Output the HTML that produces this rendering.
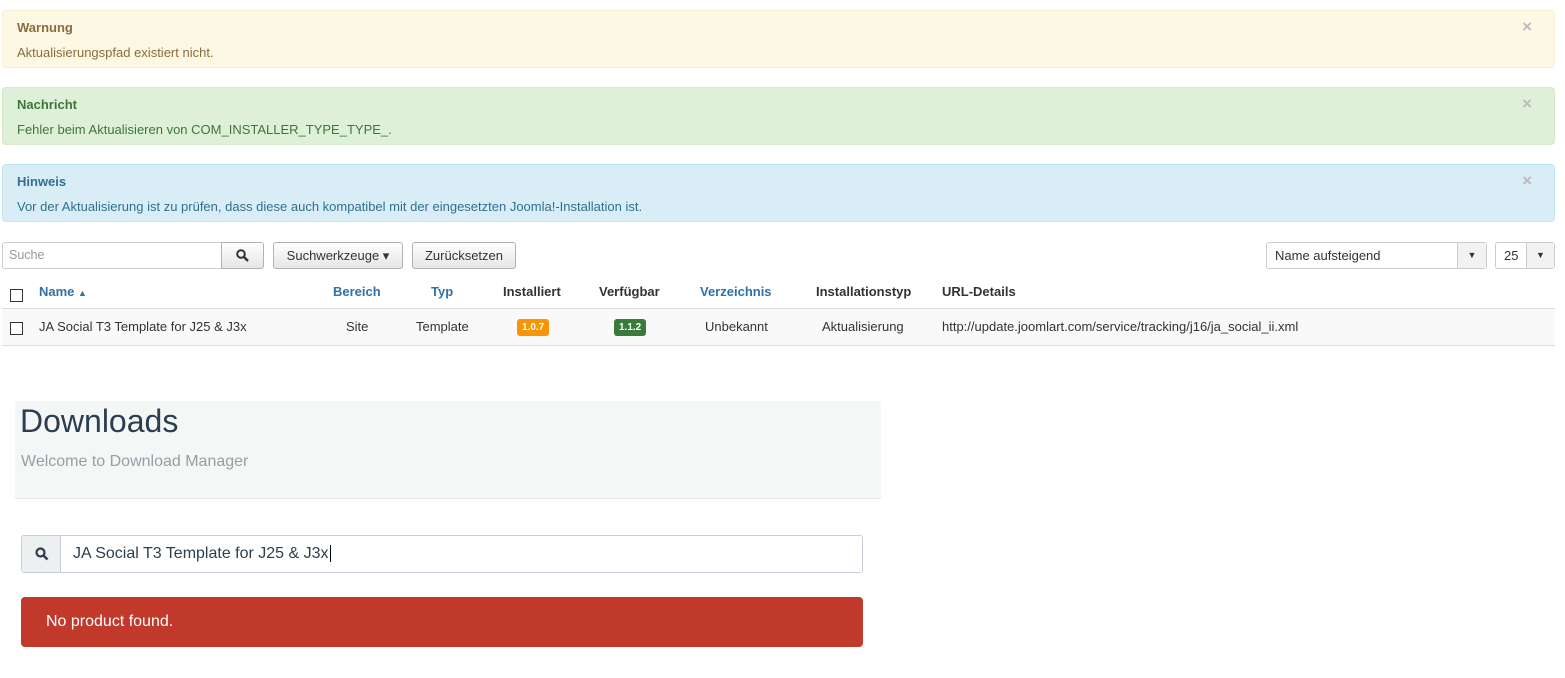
<!DOCTYPE html>
<html><head><meta charset="utf-8"><style>
*{box-sizing:border-box;margin:0;padding:0}
body{width:1565px;height:678px;background:#fff;font-family:"Liberation Sans",Arial,sans-serif;font-size:13px;color:#333;position:relative;overflow:hidden}
.a{position:absolute}
.alert{position:absolute;left:2px;width:1553px;height:58px;border:1px solid;border-radius:4px}
.alert b{position:absolute;left:14px;top:9px;font-size:13px}
.alert span{position:absolute;left:14px;top:34px;font-size:13px}
.alert i{position:absolute;right:22px;top:6px;font-style:normal;font-size:17px;font-weight:bold;color:#bbb}
.btn{position:absolute;top:242px;height:27px;border:1px solid #b3b3b3;border-radius:3px;background:linear-gradient(#fff,#e6e6e6);font-size:13px;line-height:25px;text-align:center;color:#333}
.th{position:absolute;top:284px;font-weight:bold;font-size:13px}
.td{position:absolute;top:319px;font-size:13px}
.cb{position:absolute;left:10px;width:13px;height:13px;border:1px solid #333;background:#fff}
.badge{position:absolute;top:319px;height:17px;border-radius:3px;color:#fff;font-weight:bold;font-size:10px;line-height:17px;padding:0 5px}
</style></head><body>
<div class="alert" style="top:10px;background:#fcf8e3;border-color:#fbeed5;color:#8a6d3b"><b>Warnung</b><span>Aktualisierungspfad existiert nicht.</span><i>×</i></div>
<div class="alert" style="top:87px;background:#dff0d8;border-color:#d6e9c6;color:#3c763d"><b>Nachricht</b><span>Fehler beim Aktualisieren von COM_INSTALLER_TYPE_TYPE_.</span><i>×</i></div>
<div class="alert" style="top:164px;background:#d9edf7;border-color:#bce8f1;color:#31708f"><b>Hinweis</b><span>Vor der Aktualisierung ist zu prüfen, dass diese auch kompatibel mit der eingesetzten Joomla!-Installation ist.</span><i>×</i></div>

<div class="a" style="left:2px;top:242px;width:220px;height:27px;border:1px solid #ccc;border-radius:3px 0 0 3px;color:#999;font-size:12.5px;line-height:25px;padding-left:6px">Suche</div>
<div class="btn" style="left:221px;width:43px;border-radius:0 3px 3px 0"><svg width="13" height="13" viewBox="0 0 13 13" style="margin-top:6px"><circle cx="5" cy="5" r="3.8" fill="none" stroke="#333" stroke-width="2"/><path d="M8 8l4 4" stroke="#333" stroke-width="2.4"/></svg></div>
<div class="btn" style="left:273px;width:130px">Suchwerkzeuge ▾</div>
<div class="btn" style="left:412px;width:104px">Zurücksetzen</div>
<div class="a" style="left:1266px;top:242px;width:221px;height:27px;border:1px solid #ccc;border-radius:3px;font-size:13px;line-height:25px;padding-left:8px">Name aufsteigend</div>
<div class="a" style="left:1457px;top:243px;width:29px;height:25px;background:#f2f2f2;border-left:1px solid #ccc;font-size:9px;line-height:25px;text-align:center">▼</div>
<div class="a" style="left:1495px;top:242px;width:60px;height:27px;border:1px solid #ccc;border-radius:3px;font-size:13px;line-height:25px;padding-left:8px">25</div>
<div class="a" style="left:1526px;top:243px;width:28px;height:25px;background:#f2f2f2;border-left:1px solid #ccc;font-size:9px;line-height:25px;text-align:center">▼</div>

<div class="cb" style="top:289px"></div>
<div class="th" style="left:39px;color:#3071a9">Name <span style="font-size:9px">▲</span></div>
<div class="th" style="left:333px;color:#3071a9">Bereich</div>
<div class="th" style="left:431px;color:#3071a9">Typ</div>
<div class="th" style="left:503px">Installiert</div>
<div class="th" style="left:599px">Verfügbar</div>
<div class="th" style="left:700px;color:#3071a9">Verzeichnis</div>
<div class="th" style="left:816px">Installationstyp</div>
<div class="th" style="left:942px">URL-Details</div>
<div class="a" style="left:2px;top:308px;width:1553px;height:38px;background:#f9f9f9;border-top:1px solid #ddd;border-bottom:1px solid #ddd"></div>
<div class="cb" style="top:322px"></div>
<div class="td" style="left:39px">JA Social T3 Template for J25 &amp; J3x</div>
<div class="td" style="left:346px">Site</div>
<div class="td" style="left:416px">Template</div>
<div class="badge" style="left:517px;background:#f89406">1.0.7</div>
<div class="badge" style="left:614px;background:#3a7a3a">1.1.2</div>
<div class="td" style="left:705px">Unbekannt</div>
<div class="td" style="left:822px">Aktualisierung</div>
<div class="td" style="left:942px">http://update.joomlart.com/service/tracking/j16/ja_social_ii.xml</div>

<div class="a" style="left:15px;top:401px;width:866px;height:98px;background:#f5f6f6;border-bottom:1px solid #e8eaea"></div>
<div class="a" style="left:20px;top:403px;font-size:32px;color:#2c3e50">Downloads</div>
<div class="a" style="left:21px;top:453px;font-size:16px;color:#95a0a6">Welcome to Download Manager</div>
<div class="a" style="left:21px;top:535px;width:842px;height:38px;border:1px solid #ccd;border-radius:3px"></div>
<div class="a" style="left:22px;top:536px;width:39px;height:36px;background:#ecf0f1;border-right:1px solid #ccd"><svg width="14" height="14" viewBox="0 0 14 14" style="margin:11px 0 0 13px"><circle cx="5.5" cy="5.5" r="4" fill="none" stroke="#2c3e50" stroke-width="2.2"/><path d="M8.5 8.5l4 4" stroke="#2c3e50" stroke-width="2.6"/></svg></div>
<div class="a" style="left:73px;top:545px;font-size:16px;color:#2c3e50">JA Social T3 Template for J25 &amp; J3x<span style="border-left:1px solid #000;margin-left:1px"></span></div>
<div class="a" style="left:21px;top:597px;width:842px;height:50px;background:#c0392b;border-radius:4px;color:#fff;font-size:16px;line-height:50px;padding-left:25px">No product found.</div>
</body></html>
